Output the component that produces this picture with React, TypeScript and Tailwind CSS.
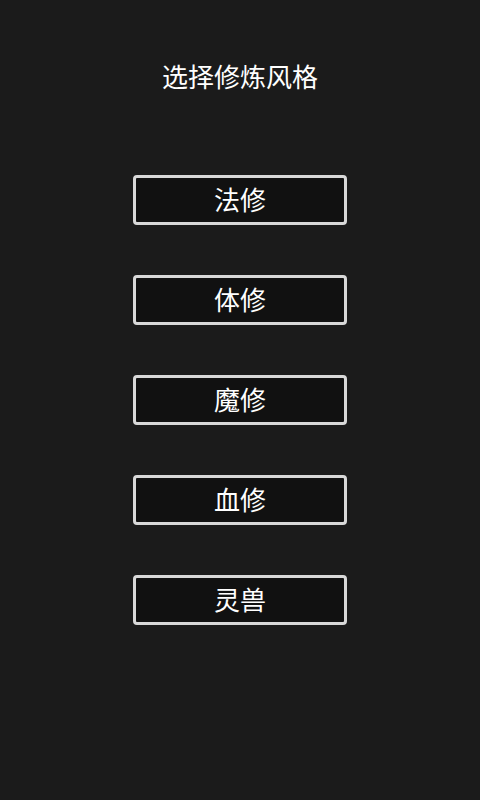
const styles = ['法修', '体修', '魔修', '血修', '灵兽'];

export default function App() {
  return (
    <div
      className="flex h-[800px] w-full flex-col items-center bg-[#1b1b1b] text-white"
      style={{ fontFamily: '"Noto Sans CJK SC", "Noto Sans", sans-serif' }}
    >
      <h1 className="mt-[60px] text-[26px] leading-[32px] font-normal">选择修炼风格</h1>
      <div className="mt-[83px] flex flex-col gap-[50px]">
        {styles.map((s) => (
          <button
            key={s}
            className="flex h-[50px] w-[214px] items-center justify-center rounded-[4px] border-[3px] border-[#d8d8d8] bg-[#111111] pb-[2px] text-[26px] leading-none text-white"
          >
            {s}
          </button>
        ))}
      </div>
    </div>
  );
}
